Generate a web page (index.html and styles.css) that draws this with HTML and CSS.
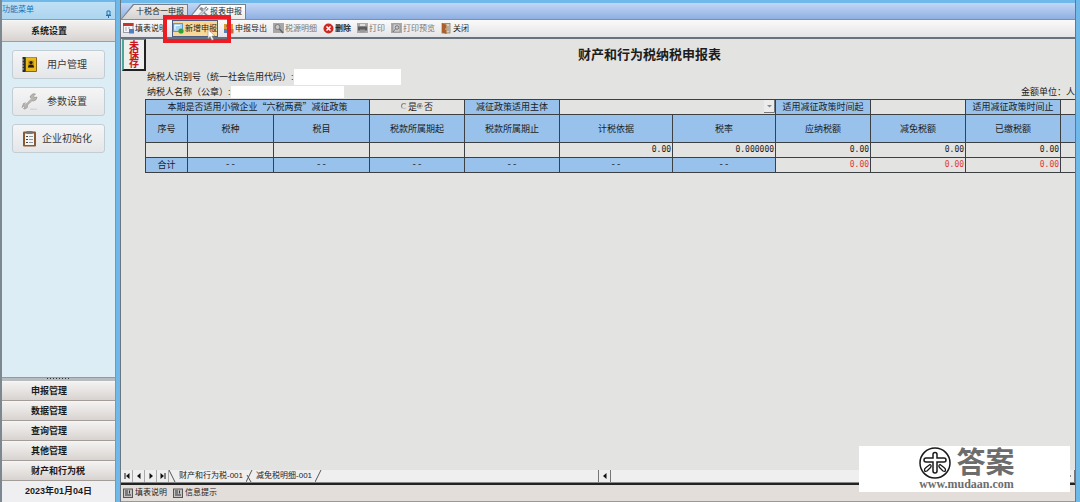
FILE: index.html
```html
<!DOCTYPE html>
<html lang="zh-CN">
<head>
<meta charset="utf-8">
<title>财产和行为税纳税申报表</title>
<link rel="stylesheet" href="styles.css">
</head>
<body>
<div class="app">
  <aside class="sidebar">
    <header class="side-title">
      <span>功能菜单</span>
      <svg class="pin" viewBox="0 0 5 8"><path d="M1 1h3v4H1zM0 5.500h5M2.500 5v3" fill="none" stroke="#1673b8"/></svg>
    </header>
    <button class="group" type="button">系统设置</button>
    <nav class="shortcuts">
      <button class="shortcut" type="button">
        <svg class="shortcut-icon" viewBox="0 0 17 17"><rect x="2" y="1" width="14" height="15" rx="1" fill="#8a6410"/><rect x="1.500" y="1" width="3" height="15" fill="#2c2a25"/><rect x="5" y="1.500" width="10" height="13.500" fill="#e8b91d"/><rect x="7" y="4.500" width="6" height="7" fill="#c79310"/><circle cx="10" cy="6.500" r="1.600" fill="#1d1a10"/><path d="M7 11.500q0-3 3-3t3 3z" fill="#1d1a10"/><path d="M1 4h2M1 7h2M1 10h2M1 13h2" stroke="#bbb"/></svg>
        <span>用户管理</span>
      </button>
      <button class="shortcut" type="button">
        <svg class="shortcut-icon" viewBox="0 0 17 17"><path d="M1 14.500l1.500-4 3-.8 4-4.200-.2-2.500L12 .8l2.500.2-2 2 1 1.600 2.500-.6-1 2.800-2.500 1.200-1.700-.2-4.300 4.300-.2 2.500-2.500 1.400-1.200-.3 1.400-1.700-1-1.200z" fill="#b9b6b2" stroke="#8d8985" stroke-width=".6"/><path d="M4.500 10.500l5.500-5.200" stroke="#f4f4f4"/><path d="M9 16.200h7" stroke="#ccc"/></svg>
        <span>参数设置</span>
      </button>
      <button class="shortcut" type="button">
        <svg class="shortcut-icon" viewBox="0 0 17 17"><rect x="2" y="1.500" width="13" height="15" rx="1" fill="#8c5a32"/><rect x="4" y="3.500" width="9" height="11.500" fill="#f4f4f2"/><path d="M5.500 1h6v3h-6z" fill="#777"/><path d="M5 6.500h2M5 9.500h2M5 12.500h2" stroke="#444"/><path d="M8 6.500h4M8 9.500h4M8 12.500h4" stroke="#8d9aa5"/></svg>
        <span>企业初始化</span>
      </button>
    </nav>
    <div class="splitter"></div>
    <button class="group" type="button">申报管理</button>
    <button class="group" type="button">数据管理</button>
    <button class="group" type="button">查询管理</button>
    <button class="group" type="button">其他管理</button>
    <button class="group" type="button">财产和行为税</button>
    <footer class="date">2023年01月04日</footer>
  </aside>

  <main class="workspace">
    <div class="tabs">
      <button class="tab" type="button"><span>十税合一申报</span></button>
      <button class="tab tab-active" type="button">
        <svg class="icon" viewBox="0 0 11 11"><path d="M1 3l2-2 3 1.500L4.500 4 10 9 8.500 10.500 3.500 5z" fill="#8a9196"/><path d="M10 2L8.500 3.500 7.500 2.500 9 1Q6.500.5 6.500 3L1 8.500 2.500 10 8 4.500Q10.500 4.500 10 2z" fill="#d2d7da" stroke="#67717a" stroke-width=".6"/></svg>
        <span>报表申报</span>
      </button>
    </div>

    <div class="toolbar">
      <button class="tool" type="button">
        <svg class="icon" viewBox="0 0 11 11"><rect x=".5" y=".5" width="9.500" height="9" fill="#f6f6f8" stroke="#9a9aa8"/><rect x="0" y="0" width="10.500" height="3" fill="#c8322f"/><path d="M2 5h2M5 5h2M2 7h2" stroke="#9ba8bb"/><rect x="6" y="6" width="5" height="4.500" fill="#4f7fc2"/></svg>
        <span>填表说明</span>
      </button>
      <button class="tool tool-hot" type="button">
        <svg class="icon" viewBox="0 0 11 11"><rect x=".5" y=".5" width="9" height="8" fill="#a9d3f0" stroke="#5c9cc9"/><path d="M2 2.500h5M2 2.500v4" stroke="#fff"/><circle cx="8" cy="8" r="2.600" fill="#31a136"/></svg>
        <span>新增申报</span>
      </button>
      <button class="tool" type="button">
        <svg class="icon" viewBox="0 0 11 11"><rect x="1" y="1" width="9" height="5" fill="#d9993c"/><path d="M3 3h5" stroke="#7c4b14"/><rect x="1" y="6" width="4" height="4" fill="#5b7fb4"/><rect x="6" y="6" width="4.500" height="4.500" fill="#c06b38"/></svg>
        <span>申报导出</span>
      </button>
      <button class="tool" type="button" disabled>
        <svg class="icon" viewBox="0 0 11 11"><rect width="11" height="10" fill="#a7a7a7"/><circle cx="4.500" cy="4" r="2.500" fill="#c9c9c9" stroke="#777"/><path d="M6.500 6l3.500 4" stroke="#666" stroke-width="1.500"/></svg>
        <span>税源明细</span>
      </button>
      <button class="tool" type="button">
        <svg class="icon" viewBox="0 0 11 11"><circle cx="5.500" cy="5.500" r="5" fill="#c92a25"/><path d="M3.500 3.500l4 4M7.500 3.500l-4 4" stroke="#fff" stroke-width="1.500"/></svg>
        <span class="strong">删除</span>
      </button>
      <button class="tool" type="button" disabled>
        <svg class="icon" viewBox="0 0 11 11"><rect width="11" height="10" fill="#aaa"/><path d="M3 1h5v2H3z" fill="#ddd"/><path d="M1 3.500h9v4H1z" fill="#5c5c5c"/><path d="M3 6.500h5v3H3z" fill="#999"/></svg>
        <span>打印</span>
      </button>
      <button class="tool" type="button" disabled>
        <svg class="icon" viewBox="0 0 11 11"><rect width="11" height="10" fill="#aaa"/><path d="M2 1h6l1 1v7H2z" fill="#ccc" stroke="#888" stroke-width=".6"/><circle cx="6" cy="4.500" r="1.800" fill="none" stroke="#777"/><path d="M4.500 6L2 9" stroke="#777"/></svg>
        <span>打印预览</span>
      </button>
      <button class="tool" type="button">
        <svg class="icon" viewBox="0 0 11 11"><rect x="1" y=".5" width="8" height="9.500" fill="#d9d0b8" stroke="#7e6b52" stroke-width=".7"/><path d="M1 .5l4.500 1v9.500L1 9.500z" fill="#a9602a"/><path d="M7 3v5" stroke="#8b8b8b"/><circle cx="4.500" cy="6" r=".5" fill="#fbe18a"/></svg>
        <span>关闭</span>
      </button>
      <div class="highlight"></div>
      <svg class="cursor" viewBox="0 0 9 12"><path d="M1 .5v9l2.200-2 1.600 3.700 1.700-.8-1.600-3.400H8z" fill="#fff" stroke="#9a8d78" stroke-width=".6"/></svg>
    </div>

    <section class="sheet">
      <div class="stamp">未保存</div>
      <h1 class="sheet-title">财产和行为税纳税申报表</h1>
      <div class="field">
        <label for="taxpayer-id">纳税人识别号（统一社会信用代码）:</label>
        <input id="taxpayer-id" class="field-id" type="text">
      </div>
      <div class="field">
        <label for="taxpayer-name">纳税人名称（公章）:</label>
        <input id="taxpayer-name" class="field-name" type="text">
        <span class="unit">金额单位：人</span>
      </div>
      <table class="grid">
        <colgroup>
          <col class="c-no"><col class="c-kind"><col class="c-item"><col class="c-std"><col class="c-std"><col class="c-base"><col class="c-rate"><col class="c-std"><col class="c-std"><col class="c-std"><col>
        </colgroup>
        <tbody>
          <tr class="row-policy">
            <th colspan="3">本期是否适用小微企业“六税两费”减征政策</th>
            <td class="choice">
              <label><input type="radio" name="policy">是</label><label><input type="radio" name="policy" checked>否</label>
            </td>
            <th>减征政策适用主体</th>
            <td colspan="2" class="picker">
              <select aria-label="减征政策适用主体"><option></option></select>
              <svg class="arrow" viewBox="0 0 11 13"><path d="M0 0h11v13H0z" fill="#ececec"/><path d="M0 12.500h10.500V0" fill="none" stroke="#777"/><path d="M3 5h5L5.500 7.500z" fill="#888"/></svg>
            </td>
            <th>适用减征政策时间起</th>
            <td></td>
            <th>适用减征政策时间止</th>
            <td></td>
          </tr>
          <tr class="row-head">
            <th>序号</th><th>税种</th><th>税目</th><th>税款所属期起</th><th>税款所属期止</th><th>计税依据</th><th>税率</th><th>应纳税额</th><th>减免税额</th><th>已缴税额</th><th></th>
          </tr>
          <tr class="row-data">
            <td></td><td></td><td></td><td></td><td></td><td>0.00</td><td>0.000000</td><td>0.00</td><td>0.00</td><td>0.00</td><td></td>
          </tr>
          <tr class="row-total">
            <th>合计</th><th class="none">--</th><th class="none">--</th><th class="none">--</th><th class="none">--</th><th class="none">--</th><th class="none">--</th><td>0.00</td><td>0.00</td><td>0.00</td><td></td>
          </tr>
        </tbody>
      </table>
    </section>

    <div class="sheet-bar">
      <div class="sheet-nav">
        <button type="button" aria-label="第一页"><svg viewBox="0 0 6 6"><path d="M1 0v6" stroke="#111"/><path d="M5.500 0v6L2 3z" fill="#111"/></svg></button>
        <button type="button" aria-label="上一页"><svg viewBox="0 0 6 6"><path d="M4.500 0v6L1 3z" fill="#111"/></svg></button>
        <button type="button" aria-label="下一页"><svg viewBox="0 0 6 6"><path d="M1.500 0v6L5 3z" fill="#111"/></svg></button>
        <button type="button" aria-label="最后一页"><svg viewBox="0 0 6 6"><path d="M5 0v6" stroke="#111"/><path d="M.5 0v6L4 3z" fill="#111"/></svg></button>
      </div>
      <div class="sheet-tabs">
        <svg class="slash" viewBox="0 0 7 12"><path d="M0 0l6 12" stroke="#555" fill="none"/></svg>
        <button type="button">财产和行为税-001</button>
        <svg class="slash" viewBox="0 0 7 12"><path d="M6 0L0 12M1 5l4 7" stroke="#555" fill="none"/></svg>
        <button type="button">减免税明细-001</button>
        <svg class="slash" viewBox="0 0 7 12"><path d="M6 0L0 12" stroke="#555" fill="none"/></svg>
      </div>
      <div class="scroller">
        <button type="button" aria-label="向左滚动"><svg viewBox="0 0 6 6"><path d="M4.500 0v6L1 3z" fill="#111"/></svg></button>
        <button type="button" aria-label="向右滚动"><svg viewBox="0 0 6 6"><path d="M1.500 0v6L5 3z" fill="#111"/></svg></button>
      </div>
    </div>

    <div class="status">
      <button class="tool" type="button">
        <svg class="icon" viewBox="0 0 11 11"><rect x=".5" y="1" width="9" height="8.500" fill="#c4c4c4" stroke="#555"/><path d="M2 3h3M2 5h3M2 7h6M6.500 2.500v3" stroke="#333"/></svg>
        <span>填表说明</span>
      </button>
      <button class="tool" type="button">
        <svg class="icon" viewBox="0 0 11 11"><rect x=".5" y="1" width="9" height="8.500" fill="#c4c4c4" stroke="#555"/><path d="M2 3h3M2 5h3M2 7h6M6.500 2.500v3" stroke="#333"/></svg>
        <span>信息提示</span>
      </button>
    </div>
  </main>
</div>

<div class="watermark">
  <div class="brand">
    <svg class="logo" viewBox="0 0 34 32"><circle cx="17" cy="16" r="15" fill="#fff" stroke="#1a1a1a" stroke-width="1.500"/><path d="M15 7.500q0-2 2-2t2 2V11h7q2 0 2 2t-2 2h-7v9q0 2-2 2t-2-2v-9H8q-2 0-2-2t2-2h7z" fill="#fff" stroke="#1a1a1a" stroke-width="1.500"/><path d="M12 17.500q2 1 .5 3L9 24q-2 1-2.500-.5T8 20.500zM22 17.500q-2 1-.5 3L25 24q2 1 2.500-.5T26 20.500z" fill="#fff" stroke="#1a1a1a" stroke-width="1.300"/></svg>
    <span>答案</span>
  </div>
  <a class="site" href="#">www.mudaan.com</a>
</div>
</body>
</html>
```
FILE: styles.css
```css
* { box-sizing: border-box; }

body {
  margin: 0;
  font-family: "Liberation Sans", "Noto Sans CJK SC", sans-serif;
  font-size: 9px;
  line-height: 12px;
  color: #1c1c1c;
  background: #6fb9ea;
}

button, input, select {
  margin: 0;
  padding: 0;
  border: 0;
  border-radius: 0;
  font: inherit;
  color: inherit;
  background: none;
}

svg { display: block; flex: none; }

.app {
  display: flex;
  gap: 4px;
  height: 100vh;
  padding-right: 4px;
  overflow: hidden;
}

/* Sidebar */
.sidebar {
  display: flex;
  flex-direction: column;
  flex: none;
  width: 116px;
  border-left: 2px solid #7d8790;
  border-right: 1px solid #5f9fca;
  background: #dcedf5;
}

.side-title {
  display: flex;
  justify-content: space-between;
  height: 20px;
  padding: 3px 4px 0 0;
  border-top: 2px solid #6fb9ea;
  border-bottom: 1px solid #63a9d8;
  background: linear-gradient(#bfe0f5, #add5ef);
  color: #1673b8;
  font-size: 8px;
  line-height: 9px;
}

.pin { width: 5px; height: 8px; margin-top: 5px; }

.group {
  flex: none;
  height: 20px;
  padding: 0 0 0 29px;
  border-top: 1px solid #f6f6f5;
  border-bottom: 1px solid #a29d99;
  background: linear-gradient(#f3f2f1, #d8d3d0);
  font-weight: bold;
  text-align: left;
}

.side-title + .group { height: 22px; }

.shortcuts {
  display: flex;
  flex: 1;
  flex-direction: column;
  gap: 8px;
  min-height: 0;
  padding: 8px 10px;
}

.shortcut {
  display: flex;
  align-items: center;
  flex: none;
  height: 29px;
  padding: 0 8px;
  border: 1px solid #c3cdd6;
  border-radius: 3px;
  background: linear-gradient(#f5f5f6, #e5e6e8);
  color: #3a3a3a;
  font-size: 10px;
}

.shortcut span { flex: 1; text-align: center; }
.shortcut-icon { width: 17px; height: 17px; }

.splitter {
  flex: none;
  height: 4px;
  border-top: 1px solid #8f9aa2;
  background: repeating-linear-gradient(90deg, #333 0 1px, transparent 1px 3px) 45px 0 / 24px 1px no-repeat #b7bcc0;
}

.date {
  flex: none;
  height: 21px;
  background: #efeff1;
  font-weight: bold;
  line-height: 20px;
  text-align: center;
}

/* Workspace */
.workspace {
  display: flex;
  flex: 1;
  flex-direction: column;
  min-width: 0;
  padding-top: 3px;
  border-left: 1px solid #6c7680;
  border-right: 1px solid #6c7680;
}

.tabs {
  display: flex;
  flex: none;
  height: 17px;
  padding-top: 1px;
  border-bottom: 1px solid #7391bd;
  background: linear-gradient(#c3d7f5, #8fafe2);
  font-size: 8px;
}

.tab {
  position: relative;
  display: flex;
  align-items: center;
  gap: 1px;
  padding: 0 4px 0 15px;
  background: #777f8a;
  clip-path: polygon(12px 0, 100% 0, 100% 100%, 0 100%);
}

.tab::before {
  content: "";
  position: absolute;
  inset: 1px 1px 0 1px;
  background: linear-gradient(#eeeceb, #d5d3d1);
  clip-path: polygon(12px 0, 100% 0, 100% 100%, 0 100%);
}

.tab > * { position: relative; }
.tab-active { padding-left: 10px; }
.tab-active::before { background: linear-gradient(#fff, #ececec); }

.icon { width: 11px; height: 11px; }

.toolbar {
  position: relative;
  display: flex;
  align-items: center;
  flex: none;
  gap: 6px;
  height: 19px;
  padding-left: 2px;
  border-bottom: 2px solid #68727d;
  background: linear-gradient(#fafafa, #e4e4e6);
}

.tool {
  display: flex;
  align-items: center;
  gap: 1px;
  height: 15px;
  font-size: 8px;
  white-space: nowrap;
}

.tool:disabled { color: #777; }
.strong { font-weight: bold; }

.tool-hot {
  background: #f9d796;
  outline: 1px solid #4b5c86;
}

.highlight {
  position: absolute;
  top: -5px;
  left: 42px;
  z-index: 2;
  width: 68px;
  height: 28px;
  border: 4px solid #ed1c24;
}

.cursor {
  position: absolute;
  top: 9px;
  left: 86px;
  z-index: 3;
  width: 9px;
  height: 12px;
}

.sheet {
  position: relative;
  flex: 1;
  min-height: 0;
  padding: 6px 0 0 24px;
  overflow: hidden;
  background: #e3e3e1;
}

.stamp {
  position: absolute;
  top: 0;
  left: 1px;
  width: 24px;
  height: 32px;
  padding: 1px 5px;
  border: 2px solid #222;
  border-top: 1px solid #4ea79d;
  border-left-color: #4ea79d;
  background: #eef0ee;
  color: #c8161d;
  font-size: 10px;
  font-weight: bold;
  line-height: 9px;
}

.sheet-title {
  margin: 0 0 4px;
  padding-left: 79px;
  font-size: 13px;
  line-height: 20px;
  text-align: center;
}

.field {
  display: flex;
  align-items: center;
  margin-bottom: 1px;
  padding-left: 2px;
  white-space: nowrap;
}

.field input { background: #fff; }
.field-id { width: 107px; height: 16px; }
.field-name { width: 113px; height: 12px; }
.unit { margin-left: auto; }

.grid {
  width: 100%;
  table-layout: fixed;
  border-collapse: collapse;
}

.c-no { width: 42px; }
.c-kind { width: 86px; }
.c-item { width: 96px; }
.c-std { width: 95px; }
.c-base { width: 113px; }
.c-rate { width: 103px; }

.grid th, .grid td {
  padding: 0 1px;
  border: 1px solid #3d4043;
  line-height: 10px;
  white-space: nowrap;
}

.grid th {
  background: #98c2eb;
  font-family: "Noto Sans CJK SC", sans-serif;
  font-weight: normal;
}

.grid tr > :last-child { border-right: 0; }
.row-policy { height: 15px; }
.row-head { height: 28px; }
.row-data, .row-total { height: 15px; }

.row-data td, .row-total td {
  font-family: "DejaVu Sans Mono", monospace;
  font-size: 8px;
  text-align: right;
}

.grid .none { font-family: "Liberation Mono", monospace; }
.row-total td { color: #e23a35; }

.grid .choice { text-align: center; }

.choice input {
  width: 6px;
  height: 6px;
  margin-right: 1px;
  appearance: none;
  border: 1px solid #888;
  border-right-color: transparent;
  border-bottom-color: #bbb;
  border-radius: 50%;
  vertical-align: 1px;
}

.choice input:checked { background: radial-gradient(#777 1px, transparent 2px); }

.grid .picker { position: relative; padding: 0; }
.picker select { display: block; width: 100%; height: 13px; appearance: none; }

.arrow {
  position: absolute;
  top: 0;
  right: 0;
  width: 11px;
  height: 13px;
  pointer-events: none;
}

/* Sheet selector and scroll bar */
.sheet-bar {
  display: flex;
  flex: none;
  height: 13px;
  border-bottom: 1px solid #888;
  background: #efefef;
}

.sheet-nav { display: flex; }

.sheet-nav button {
  display: flex;
  align-items: center;
  justify-content: center;
  width: 12px;
  border-right: 1px solid #aaa;
}

.sheet-nav svg, .scroller svg { width: 6px; height: 6px; }

.sheet-tabs {
  display: flex;
  flex: 1;
  gap: 3px;
  font-size: 8px;
}

.slash { width: 7px; height: 12px; }

.scroller {
  display: flex;
  justify-content: space-between;
  flex: 0 0 50%;
  border-left: 1px solid #777;
}

.scroller button {
  display: flex;
  align-items: center;
  justify-content: center;
  width: 12px;
  border-right: 1px solid #777;
}

.status {
  display: flex;
  align-items: center;
  flex: none;
  gap: 6px;
  height: 19px;
  padding-left: 2px;
  border-top: 2px solid #222;
  border-bottom: 1px solid #999;
  background: #e4dedb;
}

/* Site mark */
.watermark {
  position: absolute;
  right: 10px;
  bottom: 10px;
  display: flex;
  flex-direction: column;
  align-items: center;
  width: 211px;
  padding: 1px 0 2px 4px;
  background: #fff;
  color: #6c6c6c;
}

.brand {
  display: flex;
  align-items: center;
  gap: 4px;
  height: 32px;
  font-size: 29px;
  font-weight: bold;
  line-height: 32px;
}

.logo { width: 34px; height: 32px; }

.site {
  color: inherit;
  font-family: "Liberation Serif", serif;
  font-size: 12px;
  font-weight: bold;
  line-height: 11px;
  text-decoration: none;
}
```
